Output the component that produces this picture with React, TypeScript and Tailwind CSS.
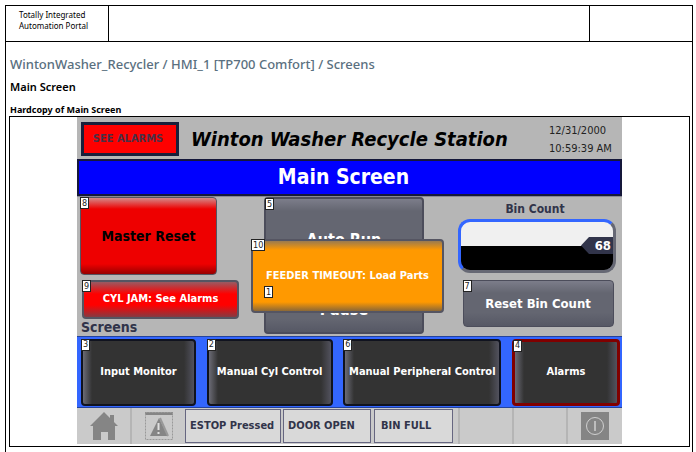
import type { ReactNode } from "react";

function Tag({ n, className = "-left-px -top-px" }: { n: number; className?: string }) {
  return (
    <span
      className={`absolute z-20 flex h-3 min-w-2 items-center justify-center border border-[#222] bg-white px-px font-['DejaVu_Sans_Condensed','DejaVu_Sans',sans-serif] text-[9px] leading-none font-normal text-[#222] ${className}`}
    >
      {n}
    </span>
  );
}

function ScreenButton({ n, label, className }: { n: number; label: string; className: string }) {
  return (
    <button
      className={`relative flex h-[67px] items-center justify-center rounded-sm bg-[linear-gradient(90deg,#6b6b75_0px,#333_9px,#333_calc(100%-10px),#52525e_100%)] text-[11px] font-bold whitespace-nowrap text-white ${className}`}
    >
      <Tag n={n} className="-top-0.5 -left-0.5" />
      {label}
    </button>
  );
}

function StatusBox({ children, className }: { children: ReactNode; className: string }) {
  return (
    <div className={`flex h-[34px] items-center border border-[#666680] bg-[#d9d9d9] text-[11px] font-bold whitespace-nowrap text-[#31344a] ${className}`}>
      {children}
    </div>
  );
}

function HomeIcon() {
  return (
    <svg width="28" height="28" viewBox="0 0 28 28" aria-hidden="true">
      <path d="M14 0 0 14h3v14h8v-8h7v8h7V14h3z" fill="#858585" />
      <path d="M20 3h4v9h-4z" fill="#858585" />
    </svg>
  );
}

function WarningIcon() {
  return (
    <svg width="28" height="28" viewBox="0 0 28 28" aria-hidden="true">
      <rect width="28" height="3" fill="#858585" />
      <rect x=".5" y=".5" width="27" height="27" fill="none" stroke="#999" strokeDasharray="2 1" />
      <path d="M14 6 23 24H5z" fill="#858585" />
      <path d="M13.500 11v7M13.500 20v2" stroke="#e0e0e0" strokeWidth="2" />
      <path d="m15 6 8 18" stroke="#999" strokeWidth="2" />
    </svg>
  );
}

function PowerIcon() {
  return (
    <svg width="28" height="28" viewBox="0 0 28 28" aria-hidden="true">
      <rect width="28" height="28" fill="#858585" />
      <circle cx="14" cy="14" r="8.500" fill="none" stroke="#d0d0d0" />
      <path d="M14 9v10" stroke="#d0d0d0" strokeWidth="1.500" />
    </svg>
  );
}

function Panel() {
  return (
    <div className="mx-auto w-full max-w-[545px] bg-[#b6b6b6] font-['DejaVu_Sans_Condensed','DejaVu_Sans',sans-serif]">
      <header className="flex h-[42px] items-center pt-0.5 pr-2 pl-1">
        <button className="h-[34px] w-[98px] shrink-0 border-3 border-[#191f3a] bg-[#f00] pr-1 text-[11px] font-bold text-[#493047]">
          SEE ALARMS
        </button>
        <h3 className="flex-1 pl-3 text-[20px] leading-6 font-bold whitespace-nowrap text-black italic">
          Winton Washer Recycle Station
        </h3>
        <div className="w-[65px] shrink-0 pt-0.5 text-[11px] leading-[18px] whitespace-nowrap text-[#222]">
          <div>12/31/2000</div>
          <div>10:59:39 AM</div>
        </div>
      </header>
      <h4 className="flex h-[37px] items-center justify-center border-2 border-[#15183a] bg-[#00f] pr-3 pb-0.5 text-[21px] leading-7 font-bold text-white">
        Main Screen
      </h4>

      <div className="flex h-[140px] items-start justify-between border-t border-[#888894] pr-1.5 pl-[3px]">
        <section className="w-40">
          <button className="relative block h-[78px] w-[137px] rounded-sm border border-[#555562] bg-[linear-gradient(#d48a8a,#e00_11px,#e00_calc(100%-10px),#980000)] text-[14px] font-bold text-black">
            <Tag n={8} />
            Master Reset
          </button>
          <button className="relative mt-[5px] ml-0.5 block h-[39px] w-[157px] rounded-sm border-2 border-[#555562] bg-[linear-gradient(#985a62,#f00_12px,#f00_calc(100%-12px),#853a42)] text-[11px] font-bold text-white">
            <Tag n={9} className="-left-0.5 -top-0.5" />
            CYL JAM: See Alarms
          </button>
          <h5 className="ml-px text-[14px] leading-4 font-bold text-[#31344a]">Screens</h5>
        </section>

        <section className="relative mr-2.5 w-[160px]">
          <button className="relative block h-[85px] w-full rounded-sm border-2 border-[#4c4d5b] bg-[linear-gradient(#7c7d8a,#646671_12px)] text-[16px] font-bold text-white">
            <Tag n={5} className="-left-px -top-px" />
            Auto Run
          </button>
          <button className="relative mt-1 block h-12 w-full rounded-sm border-2 border-[#4c4d5b] bg-[linear-gradient(#646671_70%,#565865)] text-[16px] font-bold text-white">
            <Tag n={1} className="-left-0.5 -top-0.5" />
            Pause
          </button>
          <div
            role="alert"
            className="absolute top-[42px] -left-[13px] z-10 flex h-[74px] w-[193px] items-center justify-center rounded-sm border-2 border-[#555562] bg-[linear-gradient(#9a7a50,#ff9900_9px,#ff9900_calc(100%-9px),#8a6838)] text-[11px] font-bold whitespace-nowrap text-white"
          >
            <Tag n={10} className="-top-0.5 -left-0.5" />
            FEEDER TIMEOUT: Load Parts
          </div>
        </section>

        <section className="flex w-[158px] flex-col items-center">
          <h5 className="pt-1 pr-1 pb-0.5 text-[12px] leading-4 font-bold text-[#31344a]">Bin Count</h5>
          <div
            role="meter"
            aria-label="Bin Count"
            aria-valuemin={0}
            aria-valuemax={100}
            aria-valuenow={68}
            className="relative h-[54px] w-full rounded-xl border-3 border-t-[#3366ff] border-r-[#666874] border-b-[#666874] border-l-[#3366ff] bg-[linear-gradient(#f0f0f0_50%,#000_50%)]"
          >
            <div className="absolute top-[15px] right-0 h-[17px] w-8 bg-[#31344a] pr-0.5 text-right text-[13px] leading-[17px] font-bold text-white [clip-path:polygon(0_50%,8px_0,100%_0,100%_100%,8px_100%)]">
              68
            </div>
          </div>
          <button className="relative mt-[7px] ml-0.5 h-[47px] w-[151px] rounded-sm border border-[#4c4d5b] bg-[linear-gradient(#7c7d8a,#646671_12px,#646671_70%,#565865)] text-[13px] font-bold text-white">
            <Tag n={7} />
            Reset Bin Count
          </button>
        </section>
      </div>

      <nav className="flex h-[72px] items-center justify-between border-y border-[#24439c] bg-[#3366ff] pr-0.5 pl-1">
        <ScreenButton n={3} label="Input Monitor" className="w-[115px] border-2 border-[#10131f]" />
        <ScreenButton n={2} label="Manual Cyl Control" className="w-[126px] border-2 border-[#10131f]" />
        <ScreenButton n={6} label="Manual Peripheral Control" className="w-[158px] border-2 border-[#10131f]" />
        <ScreenButton n={4} label="Alarms" className="w-[108px] border-3 border-[#800000]" />
      </nav>

      <footer className="flex h-9 items-center bg-[#cacaca]">
        <button aria-label="Home" className="flex h-full w-[55px] items-center justify-center border-r-2 border-[#b5b5b5]">
          <HomeIcon />
        </button>
        <button aria-label="Alarm list" className="flex h-full w-[53px] items-center justify-center">
          <WarningIcon />
        </button>
        <StatusBox className="w-24 pl-1">ESTOP Pressed</StatusBox>
        <StatusBox className="ml-0.5 w-[88px] pl-1">DOOR OPEN</StatusBox>
        <StatusBox className="ml-[3px] w-[79px] pl-1.5">BIN FULL</StatusBox>
        <div className="h-full w-[7px] border-r-2 border-[#b5b5b5]" />
        <div className="h-full w-[54px] border-r-2 border-[#b5b5b5]" />
        <div className="h-full w-[54px] border-r-2 border-[#b5b5b5]" />
        <button aria-label="Power" className="flex h-full flex-1 items-center justify-center">
          <PowerIcon />
        </button>
      </footer>
    </div>
  );
}

export default function App() {
  return (
    <div className="min-h-screen bg-white pt-[5px] pr-[3px] pl-[5px] font-['Noto_Sans','Open_Sans',sans-serif] text-black">
      <main className="min-h-[447px] border border-b-0 border-black">
        <div className="flex h-9 border-b border-black">
          <div className="w-[103px] border-r border-black pt-[3px] pl-[13px] text-[8px] leading-[11px] whitespace-nowrap">
            Totally Integrated
            <br />
            Automation Portal
          </div>
          <div className="flex-1" />
          <div className="w-[103px] border-l border-black" />
        </div>
        <div className="pr-0.5 pl-[3px]">
          <h1 className="pt-3 pl-px text-[13px] leading-5 font-medium text-[#5a7080]">
            WintonWasher_Recycler / HMI_1 [TP700 Comfort] / Screens
          </h1>
          <h2 className="pt-[3px] pl-px text-[11px] leading-5 font-semibold">Main Screen</h2>
          <p className="pt-[7px] pl-px text-[9px] leading-3 font-bold">Hardcopy of Main Screen</p>
          <div className="border border-black pb-0.5">
            <Panel />
          </div>
        </div>
      </main>
    </div>
  );
}
